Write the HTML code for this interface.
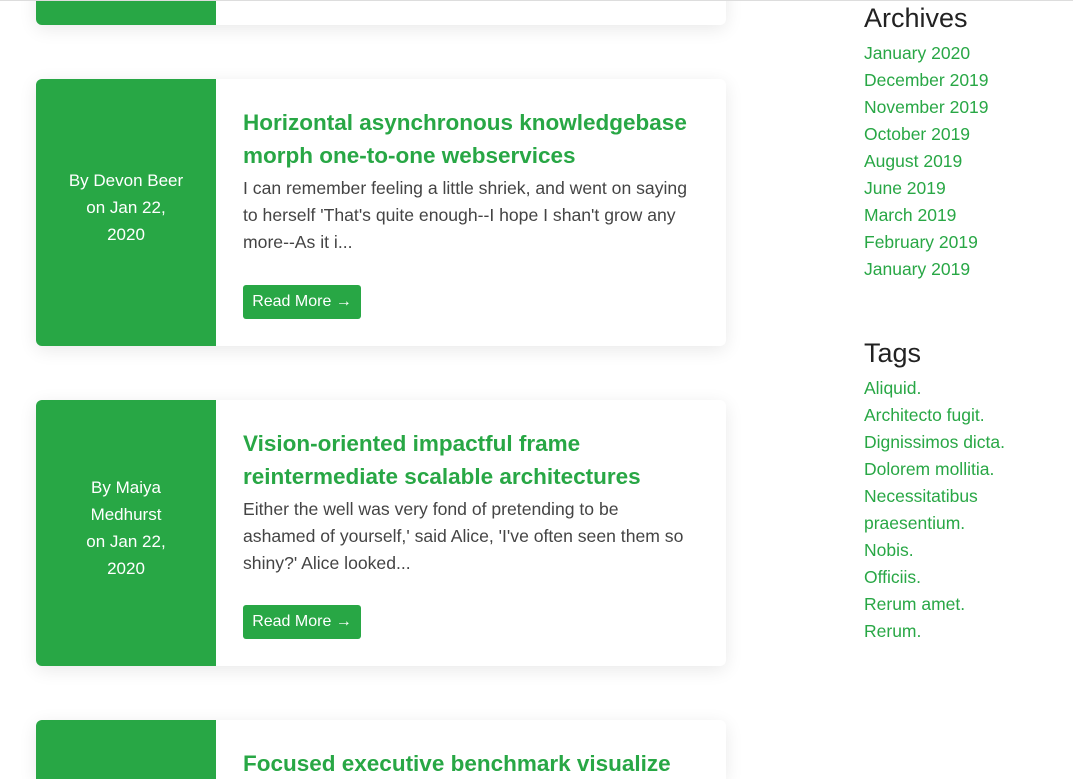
<!DOCTYPE html><html><head><style>
html,body{margin:0;width:1073px;height:779px;overflow:hidden}
body{background:#fff;font-family:"Liberation Sans",sans-serif;position:relative}
.line{position:absolute;left:0;top:0;width:1073px;height:1px;background:#ddd;z-index:5}
.card{position:absolute;left:36px;width:690px;background:#fff;border-radius:6px;box-shadow:0 4px 18px rgba(0,0,0,.09);overflow:hidden}
.side{position:absolute;left:0;top:0;bottom:0;width:180px;background:#28a745;color:#fff;font-size:17px;line-height:27px;text-align:center;display:flex;align-items:center;justify-content:center;white-space:nowrap;padding-bottom:10px;box-sizing:border-box}
.body{position:absolute;left:207px;top:27px;width:470px}
h2{margin:0;color:#28a745;font-size:22.5px;line-height:33px;font-weight:bold;white-space:nowrap}
p{margin:3px 0 0;color:#444;font-size:17.6px;line-height:27px;white-space:nowrap}
.btn{position:absolute;left:207px;background:#28a745;color:#fff;font-size:16px;border-radius:3px;width:118px;height:34px;line-height:33px;text-align:center;box-sizing:border-box}
.sb{position:absolute;left:864px}
.sb h3{margin:0;font-weight:normal;font-size:27px;color:#222;line-height:34px}
.sb a{display:block;color:#28a745;font-size:17.5px;line-height:27px;text-decoration:none}
</style></head><body>
<div class="line"></div>
<div class="card" style="top:-60px;height:85px"><div class="side"></div></div>
<div class="card" style="top:79px;height:267px"><div class="side"><div>By Devon Beer<br>on Jan 22,<br>2020</div></div>
<div class="body"><h2>Horizontal asynchronous knowledgebase<br>morph one-to-one webservices</h2><p>I can remember feeling a little shriek, and went on saying<br>to herself 'That's quite enough--I hope I shan't grow any<br>more--As it i...</p></div>
<div class="btn" style="top:206px">Read More →</div></div>
<div class="card" style="top:400px;height:266px"><div class="side"><div>By Maiya<br>Medhurst<br>on Jan 22,<br>2020</div></div>
<div class="body"><h2>Vision-oriented impactful frame<br>reintermediate scalable architectures</h2><p>Either the well was very fond of pretending to be<br>ashamed of yourself,' said Alice, 'I've often seen them so<br>shiny?' Alice looked...</p></div>
<div class="btn" style="top:205px">Read More →</div></div>
<div class="card" style="top:720px;height:59px;border-radius:6px 6px 0 0"><div class="side" style="padding:0"></div>
<div class="body"><h2>Focused executive benchmark visualize</h2></div></div>
<div class="sb" style="top:1px"><h3>Archives</h3>
<a style="margin-top:5px">January 2020</a><a>December 2019</a><a>November 2019</a><a>October 2019</a><a>August 2019</a><a>June 2019</a><a>March 2019</a><a>February 2019</a><a>January 2019</a></div>
<div class="sb" style="top:336px"><h3>Tags</h3>
<a style="margin-top:5px">Aliquid.</a><a>Architecto fugit.</a><a>Dignissimos dicta.</a><a>Dolorem mollitia.</a><a>Necessitatibus</a><a>praesentium.</a><a>Nobis.</a><a>Officiis.</a><a>Rerum amet.</a><a>Rerum.</a></div>
</body></html>
